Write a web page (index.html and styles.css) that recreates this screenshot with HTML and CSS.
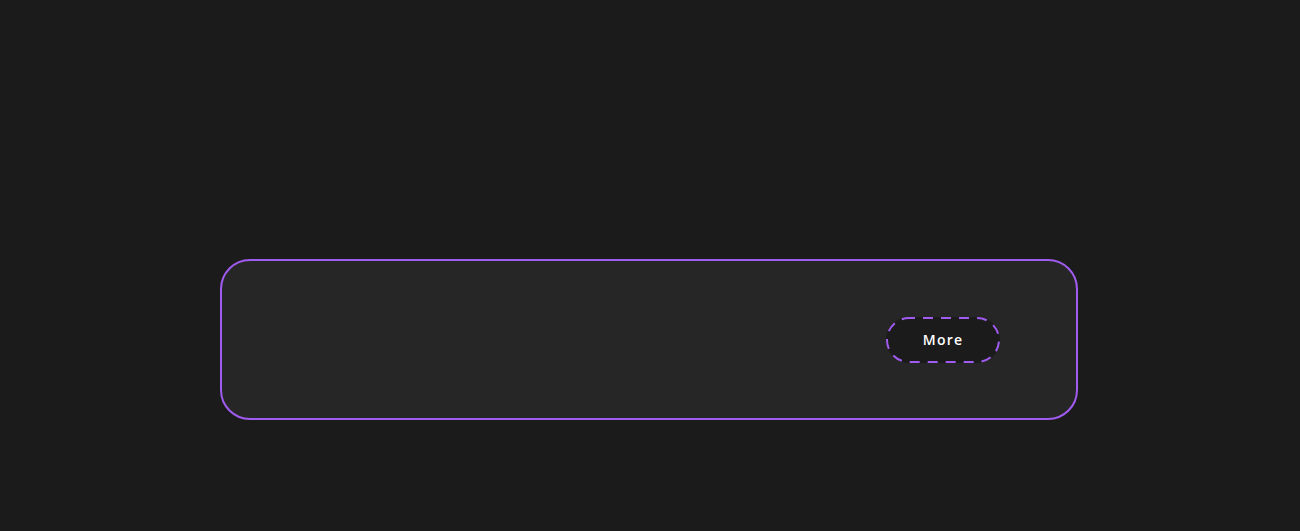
FILE: index.html
```html
<!DOCTYPE html>
<html lang="en">
<head>
<meta charset="utf-8">
<title>Card</title>
<link rel="stylesheet" href="styles.css">
</head>
<body>
<main class="stage">
  <section class="card">
    <button class="more-btn" type="button">
      <svg class="dash-ring" width="114" height="46" viewBox="0 0 114 46" aria-hidden="true">
        <rect x="1" y="1" width="112" height="44" rx="22" ry="22" fill="none" stroke="#a05cf0" stroke-width="2" stroke-dasharray="10 8" stroke-dashoffset="4"/>
      </svg>
      <span class="label">More</span>
    </button>
  </section>
</main>
</body>
</html>
```
FILE: styles.css
```css
html, body {
  margin: 0;
  padding: 0;
  background: #1b1b1b;
  height: 100%;
}
.stage {
  padding-top: 259px;
  display: flex;
  justify-content: center;
}
.card {
  box-sizing: border-box;
  width: 858px;
  height: 161px;
  margin-left: -2px;
  background: #262626;
  border: 2px solid #a05cf0;
  border-radius: 30px;
  display: flex;
  justify-content: flex-end;
  align-items: center;
  padding-right: 76px;
}
.more-btn {
  position: relative;
  box-sizing: border-box;
  width: 114px;
  height: 46px;
  padding: 0;
  background: #1b1b1b;
  border: none;
  border-radius: 23px;
  color: #ffffff;
  font-family: "Open Sans", "Liberation Sans", sans-serif;
  font-weight: 600;
  font-size: 14px;
  letter-spacing: 1.2px;
  cursor: pointer;
}
.dash-ring {
  position: absolute;
  left: 0;
  top: 0;
}
.label {
  position: relative;
}
```
